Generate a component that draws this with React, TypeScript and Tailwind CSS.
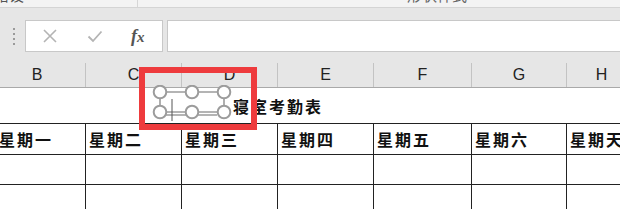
import React from "react";

const COLS = [
  { key: "B", width: 97 },
  { key: "C", width: 96 },
  { key: "D", width: 96 },
  { key: "E", width: 96 },
  { key: "F", width: 98 },
  { key: "G", width: 95 },
  { key: "H", width: 70 },
];

const DAYS = ["星期一", "星期二", "星期三", "星期四", "星期五", "星期六", "星期天"];

const cjk = { fontFamily: '"Noto Sans CJK SC", "Noto Sans", sans-serif' };

function FormulaBar() {
  return (
    <div className="flex h-[32px] items-stretch">
      <div className="flex w-[25px] flex-col items-center justify-center gap-[3px] pl-[2px]">
        <span className="h-[2px] w-[2px] bg-[#9a9a9a]" />
        <span className="h-[2px] w-[2px] bg-[#9a9a9a]" />
        <span className="h-[2px] w-[2px] bg-[#9a9a9a]" />
        <span className="h-[2px] w-[2px] bg-[#9a9a9a]" />
      </div>
      <div className="flex w-[138px] items-center border border-[#c8c8c8] bg-white">
        <svg width="16" height="16" viewBox="0 0 16 16" className="ml-[16px]">
          <path d="M2 2 L14 14 M14 2 L2 14" stroke="#b4b4b4" strokeWidth="1.6" />
        </svg>
        <svg width="16" height="16" viewBox="0 0 16 16" className="ml-[29px]">
          <path d="M1.5 8.5 L6 13 L14.5 3.5" stroke="#b4b4b4" strokeWidth="1.8" fill="none" />
        </svg>
        <span
          className="ml-[28px] text-[18px] font-bold italic leading-none text-[#555]"
          style={{ fontFamily: '"Liberation Serif", serif' }}
        >
          f<span className="text-[15px]">x</span>
        </span>
      </div>
      <div className="ml-[4px] flex-1 border border-r-0 border-[#c8c8c8] bg-white" />
    </div>
  );
}

function ShapeOverlay() {
  return (
    <div className="pointer-events-none absolute left-[139px] top-[67px] h-[63px] w-[118px] border-[6px] border-[#ee3b3d]">
      <svg
        width="90"
        height="45"
        viewBox="0 0 90 45"
        className="absolute left-[7px] top-[12px]"
      >
        <g stroke="#9c9c9c" strokeWidth="1.6" fill="none">
          <path d="M14 7 H65 M14 27 H65 M14 30 H65 M8 14 V20 M72 14 V20" />
          <path d="M20 14 V36" stroke="#555" strokeWidth="1" />
        </g>
        <g stroke="#9c9c9c" strokeWidth="2" fill="#fff">
          <circle cx="8" cy="7" r="6.3" />
          <circle cx="40" cy="7" r="6.3" />
          <circle cx="72" cy="7" r="6.3" />
          <circle cx="8" cy="27" r="6.3" />
          <circle cx="40" cy="27" r="6.3" />
          <circle cx="72" cy="27" r="6.3" />
        </g>
      </svg>
    </div>
  );
}

export default function App() {
  return (
    <div
      className="relative h-[209px] w-[620px] overflow-hidden bg-[#e6e6e6]"
      style={{ fontFamily: '"Liberation Sans", Arial, sans-serif' }}
    >
      {/* ribbon bottom, labels cut off */}
      <div className="relative h-[8px] overflow-hidden border-b border-[#d4d4d4] bg-[#f3f3f3]">
        <span
          className="absolute left-[-6px] top-[-16px] text-[15px] text-[#555]"
          style={cjk}
        >
          格设
        </span>
        <span className="absolute left-[137px] top-0 h-[8px] w-px bg-[#d6d6d6]" />
        <span
          className="absolute left-[407px] top-[-16px] text-[15px] text-[#666]"
          style={cjk}
        >
          形状样式
        </span>
      </div>
      <div className="h-[12px]" />
      <FormulaBar />
      <div className="h-[11px]" />

      <div className="ml-[-11px]">
        {/* column headers */}
        <div className="flex h-[25px] border-b border-[#a9a9a9]">
          {COLS.map((c) => (
            <div
              key={c.key}
              className="flex shrink-0 items-center justify-center border-r border-[#c3c3c3] text-[16px] text-[#222]"
              style={{ width: c.width }}
            >
              {c.key}
            </div>
          ))}
        </div>

        {/* merged title row */}
        <div className="flex h-[36px] items-center border-b border-[#222] bg-white pl-[244px]">
          <span className="text-[16px] font-bold tracking-[2px] text-[#111]" style={cjk}>
            寝室考勤表
          </span>
        </div>

        {/* weekday row */}
        <div className="flex h-[31px] border-b border-[#222] bg-white">
          {COLS.map((c, i) => (
            <div
              key={c.key}
              className="flex shrink-0 items-center border-r border-[#222] text-[16px] font-bold tracking-[2px] text-[#111]"
              style={{ width: c.width, ...cjk, paddingLeft: i === 0 ? 10 : 3 }}
            >
              {DAYS[i]}
            </div>
          ))}
        </div>

        {[0, 1].map((r) => (
          <div key={r} className="flex h-[30px] border-b border-[#222] bg-white">
            {COLS.map((c) => (
              <div
                key={c.key}
                className="shrink-0 border-r border-[#222]"
                style={{ width: c.width }}
              />
            ))}
          </div>
        ))}
      </div>

      <ShapeOverlay />
    </div>
  );
}
